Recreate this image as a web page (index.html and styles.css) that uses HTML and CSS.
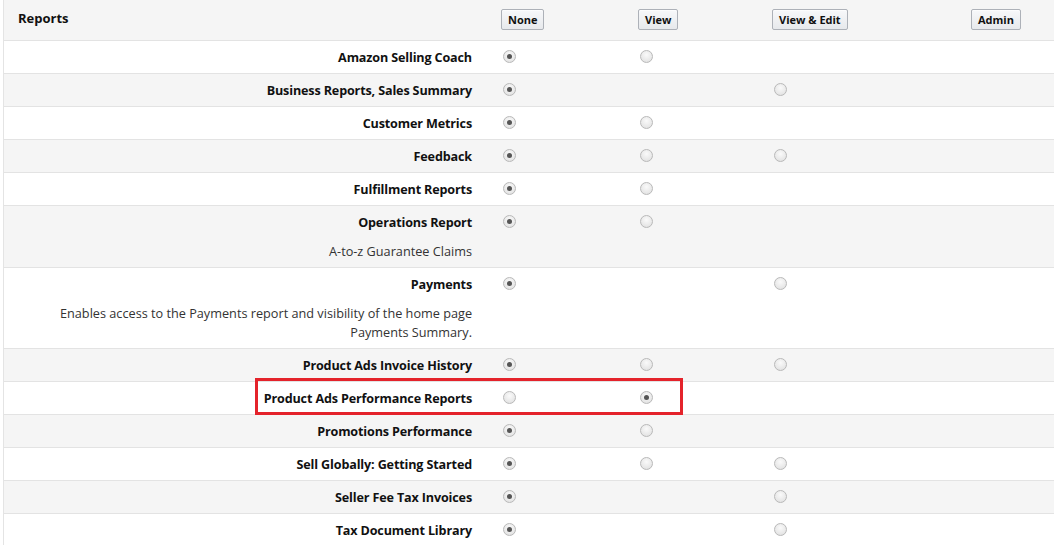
FILE: index.html
```html
<!DOCTYPE html>
<html>
<head>
<meta charset="utf-8">
<link rel="stylesheet" href="styles.css">
</head>
<body>
<div class="perm">
  <div class="row head">
    <div class="label title-cell">Reports</div>
    <div class="cell"><button class="btn">None</button></div>
    <div class="cell"><button class="btn">View</button></div>
    <div class="cell"><button class="btn">View &amp; Edit</button></div>
    <div class="cell"><button class="btn">Admin</button></div>
  </div>

  <div class="row">
    <div class="label"><div class="name">Amazon Selling Coach</div></div>
    <div class="cell"><span class="radio on"></span></div>
    <div class="cell"><span class="radio"></span></div>
    <div class="cell"></div>
    <div class="cell"></div>
  </div>

  <div class="row alt">
    <div class="label"><div class="name">Business Reports, Sales Summary</div></div>
    <div class="cell"><span class="radio on"></span></div>
    <div class="cell"></div>
    <div class="cell"><span class="radio"></span></div>
    <div class="cell"></div>
  </div>

  <div class="row">
    <div class="label"><div class="name">Customer Metrics</div></div>
    <div class="cell"><span class="radio on"></span></div>
    <div class="cell"><span class="radio"></span></div>
    <div class="cell"></div>
    <div class="cell"></div>
  </div>

  <div class="row alt">
    <div class="label"><div class="name">Feedback</div></div>
    <div class="cell"><span class="radio on"></span></div>
    <div class="cell"><span class="radio"></span></div>
    <div class="cell"><span class="radio"></span></div>
    <div class="cell"></div>
  </div>

  <div class="row">
    <div class="label"><div class="name">Fulfillment Reports</div></div>
    <div class="cell"><span class="radio on"></span></div>
    <div class="cell"><span class="radio"></span></div>
    <div class="cell"></div>
    <div class="cell"></div>
  </div>

  <div class="row alt">
    <div class="label">
      <div class="name">Operations Report</div>
      <div class="desc">A-to-z Guarantee Claims</div>
    </div>
    <div class="cell"><span class="radio on"></span></div>
    <div class="cell"><span class="radio"></span></div>
    <div class="cell"></div>
    <div class="cell"></div>
  </div>

  <div class="row">
    <div class="label">
      <div class="name">Payments</div>
      <div class="desc">Enables access to the Payments report and visibility of the home page Payments Summary.</div>
    </div>
    <div class="cell"><span class="radio on"></span></div>
    <div class="cell"></div>
    <div class="cell"><span class="radio"></span></div>
    <div class="cell"></div>
  </div>

  <div class="row alt">
    <div class="label"><div class="name">Product Ads Invoice History</div></div>
    <div class="cell"><span class="radio on"></span></div>
    <div class="cell"><span class="radio"></span></div>
    <div class="cell"><span class="radio"></span></div>
    <div class="cell"></div>
  </div>

  <div class="row marked">
    <div class="label"><div class="name">Product Ads Performance Reports</div></div>
    <div class="cell"><span class="radio"></span></div>
    <div class="cell"><span class="radio on"></span></div>
    <div class="cell"></div>
    <div class="cell"></div>
    <div class="highlight"></div>
  </div>

  <div class="row alt">
    <div class="label"><div class="name">Promotions Performance</div></div>
    <div class="cell"><span class="radio on"></span></div>
    <div class="cell"><span class="radio"></span></div>
    <div class="cell"></div>
    <div class="cell"></div>
  </div>

  <div class="row">
    <div class="label"><div class="name">Sell Globally: Getting Started</div></div>
    <div class="cell"><span class="radio on"></span></div>
    <div class="cell"><span class="radio"></span></div>
    <div class="cell"><span class="radio"></span></div>
    <div class="cell"></div>
  </div>

  <div class="row alt">
    <div class="label"><div class="name">Seller Fee Tax Invoices</div></div>
    <div class="cell"><span class="radio on"></span></div>
    <div class="cell"></div>
    <div class="cell"><span class="radio"></span></div>
    <div class="cell"></div>
  </div>

  <div class="row">
    <div class="label"><div class="name">Tax Document Library</div></div>
    <div class="cell"><span class="radio on"></span></div>
    <div class="cell"></div>
    <div class="cell"><span class="radio"></span></div>
    <div class="cell"></div>
  </div>
</div>
</body>
</html>
```

FILE: styles.css
```css
html, body {
  margin: 0;
  padding: 0;
  background: #ffffff;
}

body {
  font-family: "Open Sans", "Liberation Sans", sans-serif;
  font-size: 13px;
  color: #111111;
}

.perm {
  margin-left: 3px;
  border-left: 1px solid #e4e4e4;
}

.row {
  display: grid;
  grid-template-columns: 497px 137px 134px 199px 1fr;
  border-bottom: 1px solid #e3e3e3;
  background: #ffffff;
  position: relative;
}

.row.alt {
  background: #f5f5f5;
}

.row.head {
  background: #f5f5f5;
  height: 41px;
  box-sizing: border-box;
  align-items: start;
}

.title-cell {
  text-align: left !important;
  padding: 9px 0 0 14px !important;
  font-weight: 700;
  line-height: 18px;
}

.label {
  text-align: right;
  padding: 7px 29px 6px 0;
  line-height: 19px;
}

.name {
  font-weight: 700;
  font-size: 12.6px;
  letter-spacing: -0.15px;
}

.desc {
  font-weight: 400;
  font-size: 12.7px;
  color: #333333;
  margin-top: 10px;
  padding-left: 25px;
}

.cell {
  padding: 9px 0 0 2px;
}

.head .cell {
  padding: 9px 0 0 0;
}

.btn {
  font-family: "Open Sans", "Liberation Sans", sans-serif;
  font-size: 11px;
  font-weight: 700;
  color: #111111;
  height: 21px;
  padding: 0 6px;
  border: 1px solid #adb1b8;
  border-radius: 2px;
  background: linear-gradient(#f7f8fa, #e7e9ec);
  box-shadow: 0 1px 0 rgba(255, 255, 255, 0.6) inset;
  line-height: 19px;
  cursor: pointer;
}

.radio {
  display: block;
  width: 11px;
  height: 11px;
  border-radius: 50%;
  border: 1px solid #b9b9b9;
  background: radial-gradient(circle at 50% 35%, #fafafa 0%, #e6e6e6 70%, #dcdcdc 100%);
  position: relative;
}

.radio.on::after {
  content: "";
  position: absolute;
  left: 3px;
  top: 3px;
  width: 5px;
  height: 5px;
  border-radius: 50%;
  background: #555555;
}

.highlight {
  position: absolute;
  left: 251px;
  top: -4px;
  width: 422px;
  height: 31px;
  border: 3px solid #e4232b;
  pointer-events: none;
}
```
